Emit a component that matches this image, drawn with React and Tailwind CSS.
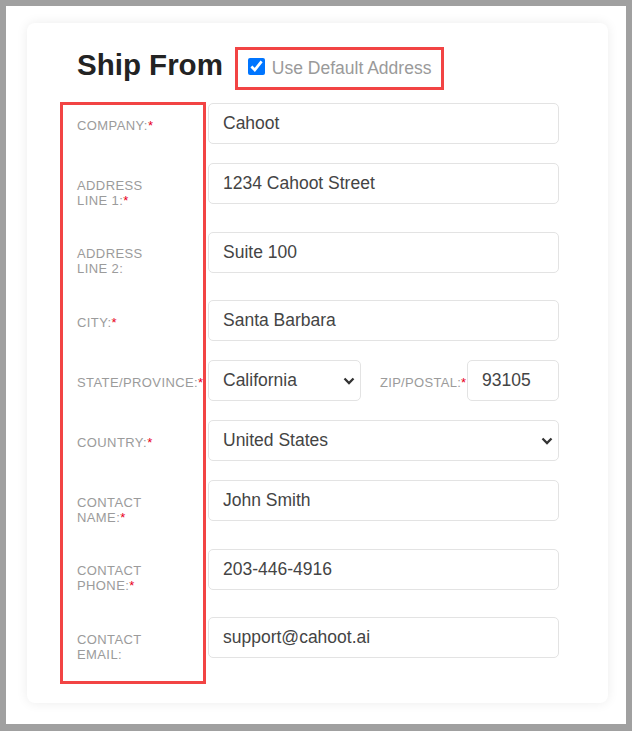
import React from "react";

const Req = () => <span className="text-[#e8001c]">*</span>;

const Label = ({ children, nowrap }) => (
  <div
    className={`w-[131px] shrink-0 pr-[50px] pt-[14.5px] pb-[5px] text-[13px] leading-[15px] tracking-[0.4px] text-[#9b9b9b] uppercase ${
      nowrap ? "whitespace-nowrap" : ""
    }`}
  >
    {children}
  </div>
);

const TextInput = ({ value, className = "" }) => (
  <input
    type="text"
    defaultValue={value}
    className={`h-[41px] min-w-0 rounded-[5px] border border-[#e3e3e3] bg-white px-[14px] text-[17.5px] text-[#444] outline-none ${className}`}
  />
);

const Chevron = () => (
  <svg
    width="12"
    height="8"
    viewBox="0 0 12 8"
    className="pointer-events-none absolute right-[6px] top-1/2 -translate-y-1/2"
  >
    <path d="M1.5 1.5 L6 6 L10.5 1.5" fill="none" stroke="#333" strokeWidth="2.3" />
  </svg>
);

const Select = ({ value, className = "" }) => (
  <div className={`relative ${className}`}>
    <select
      defaultValue={value}
      className="h-[41px] w-full appearance-none rounded-[5px] border border-[#e3e3e3] bg-white pl-[14px] pr-[24px] text-[17.5px] text-[#444] outline-none"
    >
      <option>{value}</option>
    </select>
    <Chevron />
  </div>
);

const Row = ({ label, nowrap, children }) => (
  <div className="flex items-start">
    <Label nowrap={nowrap}>{label}</Label>
    <div className="flex flex-1 items-start">{children}</div>
  </div>
);

export default function App() {
  return (
    <div className="h-[731px] w-[632px] border-[6px] border-b-[7px] border-[#a0a0a0] bg-white font-['Liberation_Sans',Arial,sans-serif]">
      <div className="relative ml-[21px] mt-[17px] w-[581px] rounded-[8px] bg-white pt-[24px] pl-[50px] pr-[49px] pb-[36px] shadow-[0_0_12px_rgba(0,0,0,0.08)]">
        {/* heading */}
        <div className="mb-[13px] flex h-[43px] items-start">
          <h2 className="mt-[3px] text-[29.5px] font-bold leading-[29px] text-[#232323]">
            Ship From
          </h2>
          <label className="ml-[12px] flex items-start gap-[7px] border-[3px] border-[#f24444] pl-[10px] pr-[10px] pt-[8px] pb-[9px] text-[17.5px] leading-[20px] text-[#9a9a9a]">
            <input
              type="checkbox"
              defaultChecked
              className="m-0 h-[17px] w-[17px] accent-[#0075ff]"
            />
            Use Default Address
          </label>
        </div>

        {/* form */}
        <div className="flex flex-col gap-[19px]">
          <Row label={<>Company:<Req /></>}>
            <TextInput value="Cahoot" className="flex-1" />
          </Row>
          <Row label={<>Address Line 1:<Req /></>}>
            <TextInput value="1234 Cahoot Street" className="flex-1" />
          </Row>
          <Row label="Address Line 2:">
            <TextInput value="Suite 100" className="flex-1" />
          </Row>
          <Row label={<>City:<Req /></>}>
            <TextInput value="Santa Barbara" className="flex-1" />
          </Row>
          <Row label={<>State/Province:<Req /></>} nowrap>
            <Select value="California" className="w-[153px]" />
            <div className="ml-[19px] whitespace-nowrap pt-[14.5px] text-[13px] leading-[15px] tracking-[0.3px] text-[#9b9b9b]">
              ZIP/POSTAL:<Req />
            </div>
            <TextInput value="93105" className="ml-auto w-[92px]" />
          </Row>
          <Row label={<>Country:<Req /></>}>
            <Select value="United States" className="flex-1" />
          </Row>
          <Row label={<>Contact Name:<Req /></>}>
            <TextInput value="John Smith" className="flex-1" />
          </Row>
          <Row label={<>Contact Phone:<Req /></>}>
            <TextInput value="203-446-4916" className="flex-1" />
          </Row>
          <Row label="Contact Email:">
            <TextInput value="support@cahoot.ai" className="flex-1" />
          </Row>
        </div>

        {/* highlight round the label column */}
        <div className="pointer-events-none absolute left-[33px] top-[79px] h-[582px] w-[146px] border-[3px] border-[#f24444]" />
      </div>
    </div>
  );
}
